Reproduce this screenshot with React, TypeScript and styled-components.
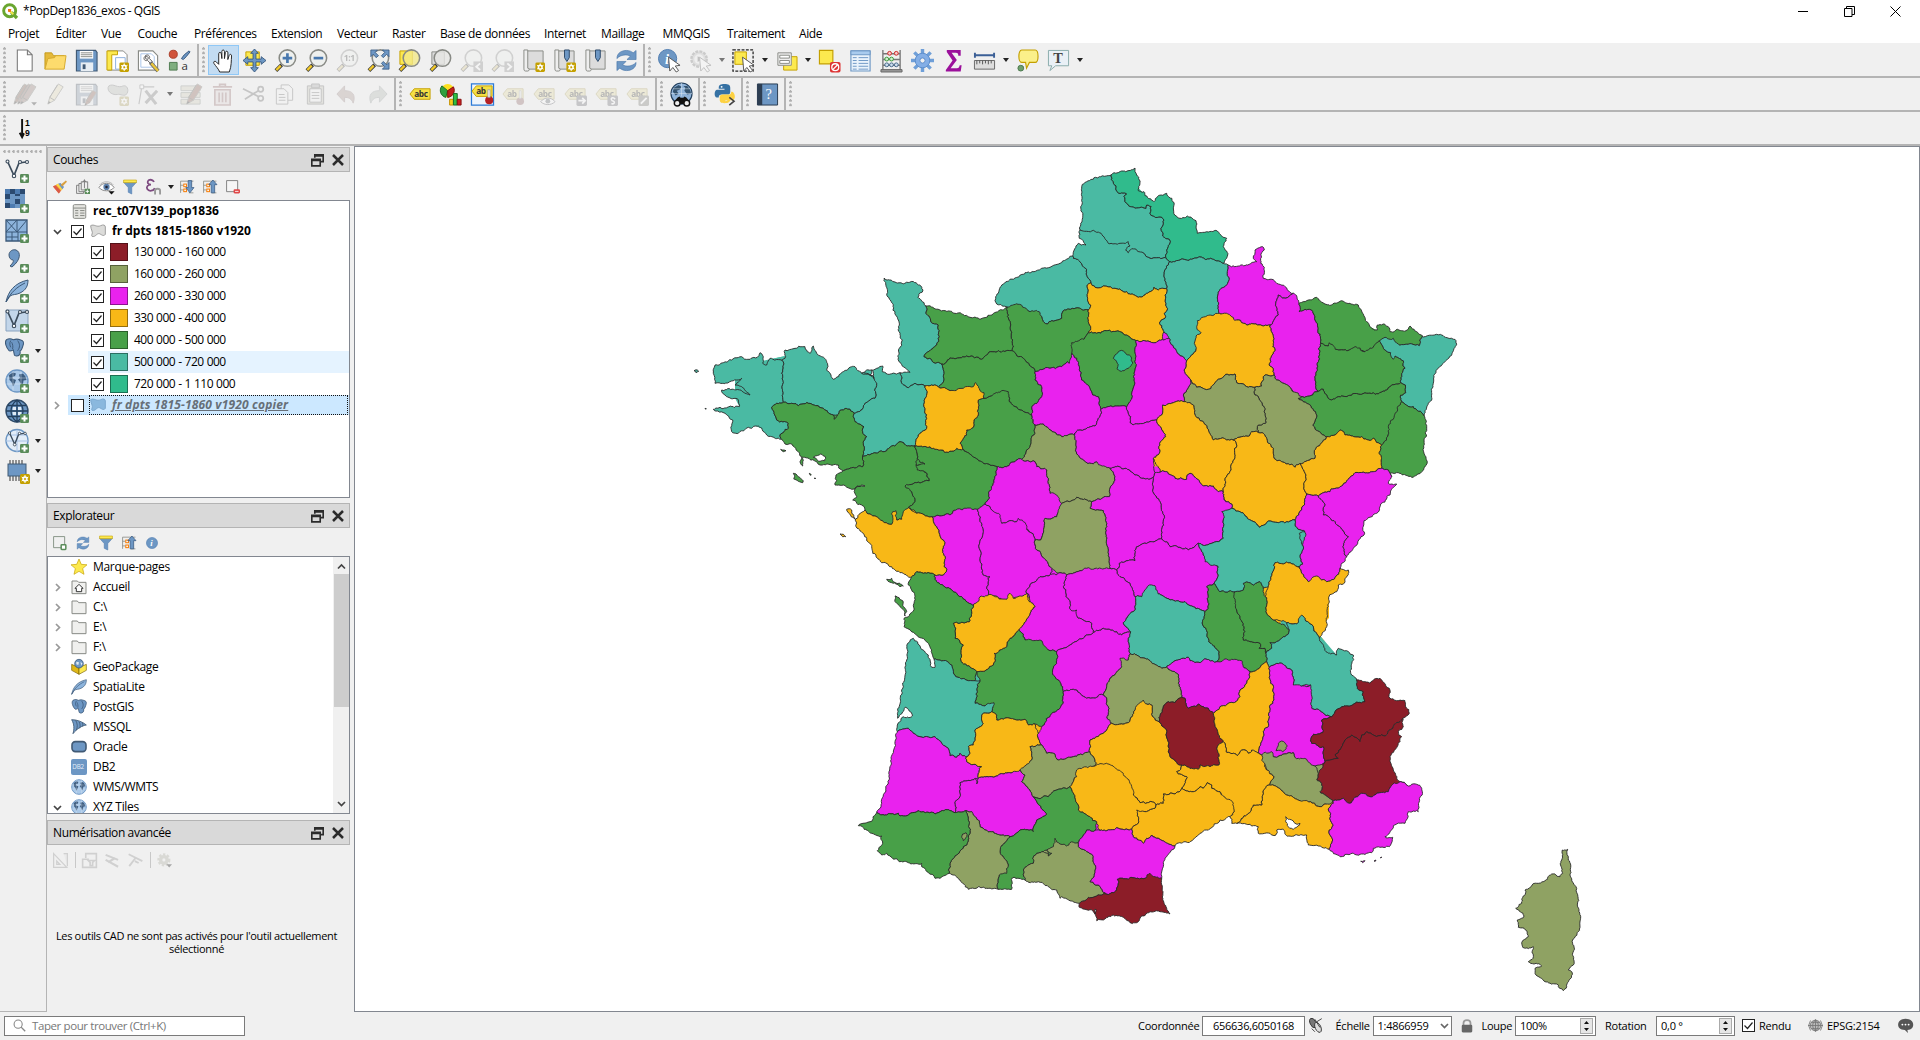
import React from "react";
import styled, { createGlobalStyle, css } from "styled-components";

/* ------------------------------------------------------------------ */
/* Theme values                                                         */
/* ------------------------------------------------------------------ */
const C = {
  window: "#f0f0f0",
  line: "#b4b4b4",
  frame: "#828790",
  title: "#d9d9d9",
  blue: "#6d97c4",
  navy: "#415a75",
  yellow: "#fce94f",
  gold: "#c4a000",
  gray: "#888a85",
};

const Global = createGlobalStyle`
  * { box-sizing: border-box; }
  body {
    margin: 0;
    background: ${C.window};
    color: #000;
    font: 12px/16px "Open Sans", "Noto Sans", sans-serif;
    letter-spacing: -0.38px;
    overflow: hidden;
  }
`;

/* ------------------------------------------------------------------ */
/* Icons                                                                */
/* ------------------------------------------------------------------ */
const Plus = () => (
  <g>
    <rect x="15" y="15" width="9" height="9" rx="1.2" fill="#5a8c5a" />
    <path d="M19.5 16.5v6M16.5 19.5h6" stroke="#fff" strokeWidth="2" />
  </g>
);
const Spark = () => (
  <g>
    <rect x="14" y="14" width="10" height="10" rx="1.5" fill={C.gold} />
    <circle cx="19" cy="19" r="2" fill="none" stroke="#fff" strokeWidth="1.4" />
    <path d="M19 15v8M15.6 17l6.8 4M22.4 17l-6.8 4" stroke="#fff" strokeWidth="1" />
    <circle cx="19" cy="19" r="1" fill={C.gold} />
  </g>
);
const Lens = ({ fill = "#eef0ee", children }: { fill?: string; children?: React.ReactNode }) => (
  <g>
    <path d="M2 22.5l6-6" stroke="#3a3a3a" strokeWidth="4" />
    <path d="M2.4 22l4.6-4.6" stroke="#f2c928" strokeWidth="2.4" />
    <circle cx="14" cy="9.5" r="8.6" fill={fill} stroke={C.gray} strokeWidth="1.6" />
    {children}
  </g>
);
const Tag = ({ text = "abc" }: { text?: string }) => (
  <g>
    <path d="M1 11.5L5.5 6H22v11H5.5z" fill="#f5e045" stroke={C.gold} />
    <text x="5.4" y="14.4" fontSize="8.6" fontWeight="700" fill="#333" fontFamily="Open Sans" letterSpacing="-.3">
      {text}
    </text>
  </g>
);
const Cursor = ({ x = 0, y = 0 }: { x?: number; y?: number }) => (
  <path
    transform={`translate(${x} ${y})`}
    d="M11 7.500l12 8.500-5 .8 3.500 4.700-2.500 1.500-3.500-4.700-3.200 3.700z"
    fill="#fff"
    stroke="#555"
  />
);
const Globe = ({ dark = false }: { dark?: boolean }) => (
  <g>
    <circle cx="12" cy="12" r="11" fill={dark ? C.blue : "#a9c8e8"} stroke={dark ? "#2e4a68" : C.blue} strokeWidth="1.4" />
    {dark ? (
      <g>
        <path d="M1 12h22M3 6.500h18M3 17.500h18M12 1v22M12 1c-8 6-8 16 0 22M12 1c8 6 8 16 0 22" stroke="#24405e" fill="none" strokeWidth="1.300" />
        <path d="M8 8h3v3H7.500zM13 8h3l.5 3H13zM7.500 13H11v3H8zM13 13h3.500l-.5 3h-3z" fill="#dfeaf5" />
      </g>
    ) : (
      <g>
        <path
          d="M4 6l4-2.500 3 1-1 2.500-2.500 1 1 2 2.500 1-1.500 4-1.500 2.500-1.500-4.500L4.500 11zM14 5.500l4-1 2.500 3L21.500 11l-3 .5-.5 3.500-1.500 2-1.500-4-2-2.500 2-1.500z"
          fill="#3d5d80"
        />
        <path d="M1.500 9h21M1.500 15h21M8 2v20M16 2v20" stroke="#ffffff" strokeOpacity=".35" />
      </g>
    )}
  </g>
);
const Recycle = () => (
  <g fill={C.blue} stroke="#3f6ea5" strokeWidth=".6">
    <path d="M2 10C2 4 7 1.500 12 1.500c3 0 5 1 7 2.500l3-2.500V11h-9.500l3.500-3.500C13 5.500 6 5.500 2 10z" />
    <path d="M22 14c0 6-5 8.500-10 8.500-3 0-5-1-7-2.500L2 22.500V13h9.500L8 16.500c3 2 10 2 14-2.500z" />
  </g>
);
const Info = () => (
  <g>
    <circle cx="11" cy="11" r="9.500" fill={C.blue} stroke="#4d7bb0" />
    <text x="8.200" y="16.500" fontSize="15" fontStyle="italic" fontWeight="700" fill="#fff" fontFamily="Liberation Serif">
      i
    </text>
  </g>
);
const Feather = () => (
  <g>
    <path d="M1 23C3 13 9 4 23 1c0 6-2 10-8 13-4 2-7 1-10 3z" fill="#8db4dc" stroke="#3b5878" />
    <path d="M1 23C6 13 12 8 20 4" stroke="#3b5878" fill="none" />
  </g>
);
const Elephant = () => (
  <g>
    <path
      d="M3 2c3-2 6-1 8 0 3-1 5-1 8 0 4 1 5 3 3 8-1 3-2 5-3 5v3c-1 4-7 4-7 1l-1-5c-2 1-4 2-5 1C3 12 0 5 3 2z"
      fill={C.blue}
      stroke="#3b5878"
      strokeWidth="1.200"
    />
    <path d="M8 3c-2 3-1 6 0 8M16 3c3 4 3 8 0 12M10 13c1-3 0-6-1-8" stroke="#3b5878" fill="none" strokeWidth="1.100" />
  </g>
);
const Vee = () => (
  <g fill="none" stroke="#3c4c5c" strokeWidth="1.700">
    <path d="M3 3.500l6 13L14 4l7-1" />
    <circle cx="2.500" cy="2.500" r="1.500" fill="#fff" strokeWidth="1.100" />
    <circle cx="9" cy="17" r="1.700" fill="#fff" strokeWidth="1.100" />
    <circle cx="15" cy="3" r="1.500" fill="#fff" strokeWidth="1.100" />
    <circle cx="22" cy="3" r="1.500" fill="#fff" strokeWidth="1.100" />
  </g>
);
const Scroll = () => (
  <g>
    <path d="M5 2h17v19H5z" fill="#dcdcdc" stroke={C.gray} />
    <path d="M2 1h4v19c2 0 2 3 0 3H3.500C2 23 2 21 2 20z" fill="#eee" stroke={C.gray} />
  </g>
);
const Pin = () => <path d="M12 1h5v8l-2.500 4L12 9z" fill={C.blue} stroke="#2e4a68" />;
const Disk = () => (
  <g>
    <path d="M1.500 1.500h20l1.500 2V23H1.500z" fill={C.blue} stroke={C.navy} strokeWidth="1.200" />
    <path d="M5 2h14v8H5z" fill="#fff" />
    <path d="M6 4h12M6 6h12M6 8h12" stroke={C.gray} />
    <path d="M6 14h13v9H6z" fill="#e8eef4" />
    <path d="M8 16h3v5H8z" fill={C.navy} />
  </g>
);
const Pencil = ({ fill = "#f0dc82", x = 0 }: { fill?: string; x?: number }) => (
  <g transform={`translate(${x} 0)`}>
    <path d="M3 22l2-7L14 1l5 3-9 14z" fill={fill} stroke="#776" />
    <path d="M5 15l5 3M13 2l-8 13" stroke="#554" fill="none" />
    <path d="M3 22l1-3 2 1z" fill="#222" />
  </g>
);
const Brackets = ({ up = false }: { up?: boolean }) => (
  <g>
    <path d="M1 2h22M1 2v20M1 9h5M1 17h5M15 22h8" stroke={C.gray} fill="none" strokeWidth="1.400" />
    <rect x="6.500" y="7" width="4.500" height="4.500" fill="#fff" stroke="#f57900" strokeWidth="1.700" />
    <rect x="6.500" y="15.500" width="4.500" height="4.500" fill="#fff" stroke="#f57900" strokeWidth="1.700" />
    {up ? (
      <path d="M17 0l7 8h-4v14h-6V8h-4z" fill={C.blue} stroke="#33557c" strokeWidth="1.200" />
    ) : (
      <path d="M14 1h6v12h4l-7 9-7-9h4z" fill={C.blue} stroke="#33557c" strokeWidth="1.200" />
    )}
  </g>
);

const ICONS: Record<string, React.ReactNode> = {
  file: <path d="M4.500 1h10.500l5 5v17h-15.500zM15 1v5h5" fill="#fff" stroke="#777" strokeWidth="1.100" />,
  open: (
    <g>
      <path d="M1 21V4h7l2 3h11v4" fill="#e5b93a" stroke="#c49a1c" />
      <path d="M1 21L4 10l7-1 1-2h11l-2 14z" fill="#fddb6d" stroke="#d5a92c" />
    </g>
  ),
  save: <Disk />,
  layout: (
    <g>
      <path d="M2 2h16l4 4v16H2z" fill="#fff" stroke={C.gray} />
      <path d="M1 2h11v4H6v16H1z" fill={C.yellow} stroke={C.gold} />
      <path d="M10 9h10v12H10z" fill="#fff" stroke="#8cb0dc" />
      <Spark />
    </g>
  ),
  layoutManager: (
    <g>
      <path d="M1.500 2h15l5 5v15h-20z" fill="#fff" stroke={C.gray} strokeWidth="1.200" />
      <path d="M4 5h11l3 3v11H4z" fill="none" stroke="#a9c4e8" />
      <path d="M9 7c-3 2-2 6 2 5l3 3 2-2-3-3c1-3-2-5-4-3l3 2-1 2-2-1z" fill="#eee" stroke="#666" />
      <path d="M14 14l8 9" stroke="#666" strokeWidth="4" />
      <path d="M15 15l7 8" stroke="#e9c63c" strokeWidth="2.400" />
    </g>
  ),
  styles: (
    <g>
      <circle cx="5.500" cy="5.500" r="4.200" fill="#d0533a" stroke="#a83d28" />
      <path d="M14 10l3-4 5-4 1 1-4 5-3 3z" fill={C.blue} stroke="#33557c" />
      <path d="M1.500 14h8v8h-8z" fill="#7fae7f" stroke="#4f7a52" />
      <text x="14" y="22" fontSize="12" fill="#333" fontFamily="Open Sans">a</text>
    </g>
  ),
  hand: (
    <path
      d="M8 24c-1-3-4-6-6-9-1-2 1-3 2.500-1.500L7 16V5c0-2 2.500-2 2.700 0l.6 5V2.500c0-2 2.600-2 2.700 0V10l1-6.500c.4-1.800 2.700-1.500 2.600.5L16.500 11l1.500-4.500c.6-1.600 2.600-1 2.400.7C20 12 20.500 18 18 24z"
      fill="#fff"
      stroke="#222"
    />
  ),
  panTo: (
    <g>
      <path d="M3 3h14v14H3z" fill={C.yellow} stroke={C.gold} />
      <path
        d="M12 0l4 4.500h-2.500v6H19V8l5 4-5 4v-2.500h-5.500v6H16L12 24l-4-4.500h2.500v-6H5V16l-5-4 5-4v2.500h5.500v-6H8z"
        fill={C.blue}
        stroke="#33557c"
        strokeWidth=".9"
      />
    </g>
  ),
  zoomIn: <Lens><path d="M14 4.500v10M9 9.500h10" stroke="#4878ae" strokeWidth="2.800" /></Lens>,
  zoomOut: <Lens><path d="M9 9.500h10" stroke="#4878ae" strokeWidth="2.800" /></Lens>,
  zoomOne: (
    <Lens>
      <text x="8" y="13" fontSize="9" fontWeight="700" fill="#444" fontFamily="Open Sans">1:1</text>
    </Lens>
  ),
  zoomFull: (
    <g>
      <Lens />
      <path
        d="M4 1h7L8.500 3.500 12 7 9.500 9 6.500 5.500 4 8zM23 1v7l-2.500-2.500L17 9l-2-2 3.500-3.500L16 1zM23 21h-7l2.500-2.500L15 15l2-2 3.500 3.500L23 14z"
        fill={C.blue}
        stroke="#33557c"
        strokeWidth=".8"
      />
    </g>
  ),
  zoomSelection: (
    <g>
      <path d="M2 2h13v14H2z" fill={C.yellow} stroke={C.gold} />
      <Lens fill="#f3e98acc" />
    </g>
  ),
  zoomLayer: (
    <g>
      <path d="M3 3h13v13H3z" fill="#ddd" stroke={C.gray} />
      <Lens fill="#e6e6e4cc" />
    </g>
  ),
  zoomLast: (
    <g>
      <Lens />
      <path d="M14 13h10v11H14z" fill="#888" />
      <path d="M21 15l-4 3.500 4 3.500" stroke="#fff" fill="none" strokeWidth="2" />
    </g>
  ),
  zoomNext: (
    <g>
      <Lens />
      <path d="M14 13h10v11H14z" fill="#888" />
      <path d="M17 15l4 3.500-4 3.500" stroke="#fff" fill="none" strokeWidth="2" />
    </g>
  ),
  view: <g><Scroll /><Spark /></g>,
  bookmarkNew: <g><Scroll /><Pin /><Spark /></g>,
  bookmark: <g><Scroll /><Pin /></g>,
  refresh: <Recycle />,
  identify: <g><g transform="translate(-1 -1)"><Info /></g><Cursor y={1} /></g>,
  action: (
    <g>
      <circle cx="10.500" cy="10.500" r="8" fill="#bbb" stroke="#777" strokeWidth="2.500" strokeDasharray="3 1.200" />
      <circle cx="10.500" cy="10.500" r="5" fill="#eee" />
      <path d="M9 7.500l5 3-5 3z" fill="#555" />
      <Cursor y={1} />
    </g>
  ),
  select: (
    <g>
      <path d="M1 1h21v22H1z" fill="none" stroke="#222" strokeDasharray="3 1.500" strokeWidth="1.300" />
      <path d="M3 3h12v13H3z" fill={C.yellow} stroke={C.gold} />
      <Cursor y={1} />
    </g>
  ),
  form: (
    <g>
      <path d="M9 8h14v14H9z" fill={C.yellow} stroke={C.gold} />
      <path d="M3 4h14v13H3z" fill="#eee" stroke={C.gray} />
      <path d="M5 6.500h10v3H5zM5 12h10v3H5z" fill="#fff" stroke={C.gray} />
    </g>
  ),
  deselect: (
    <g>
      <path d="M1.500 1.500h14v14h-14z" fill={C.yellow} stroke={C.gold} strokeWidth="1.200" />
      <rect x="12.500" y="13.500" width="11" height="11" rx="2" fill="#d33" />
      <circle cx="18" cy="19" r="3.600" fill="none" stroke="#fff" strokeWidth="1.400" />
      <path d="M20.500 16.500l-5 5" stroke="#fff" strokeWidth="1.400" />
    </g>
  ),
  table: (
    <g>
      <path d="M2 2h20v21H2z" fill="#eaf3fc" stroke={C.blue} strokeWidth="1.200" />
      <path d="M2 2h20v4H2z" fill="#a9cbee" stroke={C.blue} />
      <path d="M4 9h4M4 12h4M4 15h4M4 18h4M4 21h4M10 9h10M10 12h10M10 15h10M10 18h10M10 21h10" stroke={C.blue} strokeWidth="1" />
    </g>
  ),
  abacus: (
    <g>
      <path d="M3 1v21M21 1v21M3 5h18M3 11h18M3 17h18" stroke="#777" strokeWidth="1.400" />
      <path d="M1 21.500h22v2.500H1z" fill="#999" stroke="#666" />
      <circle cx="10" cy="4.500" r="2" fill="#f7caca" stroke="#c22" />
      <circle cx="17" cy="4.500" r="2" fill="#f7caca" stroke="#c22" />
      <circle cx="7" cy="10.500" r="2" fill="#cdeccd" stroke="#3a9a3a" />
      <circle cx="12" cy="10.500" r="2" fill="#cdeccd" stroke="#3a9a3a" />
      <circle cx="7" cy="16.500" r="2" fill="#cde" stroke="#468" />
      <circle cx="12" cy="16.500" r="2" fill="#cde" stroke="#468" />
      <circle cx="17" cy="16.500" r="2" fill="#cde" stroke="#468" />
    </g>
  ),
  gear: (
    <g>
      <path
        d="M12 0v24M0 12h24M3.500 3.500l17 17M20.500 3.500l-17 17"
        stroke="#6f9fd8"
        strokeWidth="3.600"
      />
      <circle cx="12" cy="12" r="7.600" fill="#83aee6" stroke="#5b8ccb" />
      <circle cx="12" cy="12" r="2.700" fill="#f0f0f0" stroke="#5b8ccb" />
    </g>
  ),
  sigma: <path d="M5 1h14.500v6H17c0-2-.5-3-2.500-3H10l5.500 7.500L9 20h6.500c2 0 2.500-1 3-3h2l-1 6.500H4V22l7-10-6-9z" fill="#9b109b" />,
  ruler: (
    <g>
      <path d="M2 4v5M22 4v5M2 6.500h20" stroke="#3b5f96" strokeWidth="2" />
      <path d="M1.500 12h21v9h-21z" fill="#ddd" stroke="#666" />
      <path d="M4 12v4M7 12v3M10 12v4M13 12v3M16 12v4M19 12v3" stroke="#555" />
    </g>
  ),
  tip: (
    <g>
      <path d="M6 1h14c4 0 4 13 0 13h-6l-3 6-1-6H6C2 14 2 1 6 1z" fill="#fbf08a" stroke={C.gold} strokeWidth="1.200" />
      <circle cx="5" cy="20" r="3" fill="#6da06d" stroke="#4f7a52" />
    </g>
  ),
  annotation: (
    <g>
      <path d="M1.500 1.500h21v16H9l-6 5 2-5H1.500z" fill="#e9f0f6" stroke="#8aa" />
      <text x="6.500" y="14.500" fontSize="15" fontWeight="700" fill="#444" fontFamily="Liberation Serif">T</text>
    </g>
  ),
  pencils: (
    <g>
      <Pencil fill="#a0522d" x={-2} />
      <Pencil fill="#b06050" x={2} />
      <Pencil fill="#b07060" x={5} />
      <path d="M19 20h6l-3 3.500z" fill="#222" />
    </g>
  ),
  pencil: <Pencil x={1} />,
  saveEdits: <g><Disk /><g transform="translate(8 7) scale(.75)"><Pencil fill="#c05030" /></g></g>,
  addFeature: <g><path d="M3 3c5-3 9 3 15 0 4-1 6 4 4 8-3 4-7 0-10 1-7 1-12-5-9-9z" fill="#b8bdaf" stroke="#777" /><Spark /></g>,
  vertex: (
    <g>
      <path d="M4 4h14M5 4L2 22" stroke="#777" strokeWidth="1.200" />
      <path d="M3 2h4v4H3z" fill="#fff" stroke="#777" />
      <path d="M9 8l11 14M21 8L9 21" stroke="#777" strokeWidth="3.200" />
    </g>
  ),
  editAttributes: (
    <g>
      <path d="M1 3h20v5H1zM1 10h20v5H1zM1 17h20v5H1z" fill="#d8cf9a" stroke="#7d8b7d" />
      <Pencil fill="#c05030" x={4} />
    </g>
  ),
  trash: <path d="M2 4h20M9 4V1.500h6V4M4 7h16v16H4zM8.500 10v10M12 10v10M15.500 10v10" fill="#ead0d0" stroke="#c06060" strokeWidth="1.700" />,
  cut: (
    <g stroke="#666" fill="none" strokeWidth="1.800">
      <path d="M1 6l16 8M3 17L17 8" />
      <circle cx="19.500" cy="6.500" r="2.700" />
      <circle cx="19.500" cy="16" r="2.700" />
    </g>
  ),
  copy: (
    <g fill="#f6f6f6" stroke="#666">
      <path d="M8.500 2h8l4 4v12h-12z" />
      <path d="M3.500 6h8l4 4v12h-12zM6 12h6M6 15h7M6 18h7" />
    </g>
  ),
  paste: (
    <g fill="#f6f6f6" stroke="#666">
      <path d="M3.500 3h17v19h-17z" fill="#c9c3a8" />
      <path d="M6 6h12v14H6zM8 10h8M8 13h8M8 16h8" />
      <path d="M8 1h8v4H8z" fill="#aaa" />
    </g>
  ),
  undo: <path d="M10 3v5c8 0 12 4 9 13-2-5-5-6-9-6v5L2 11.500z" fill="#c09080" stroke="#a77" />,
  redo: <path d="M14 3v5C6 8 2 12 5 21c2-5 5-6 9-6v5l8-8.500z" fill="#a8b8a8" stroke="#899" />,
  label: <Tag />,
  diagram: (
    <g>
      <circle cx="8" cy="8" r="7" fill="#fce020" />
      <path d="M8 8L2 3a7.500 7.500 0 0 0 4 12z" fill="#30a040" stroke="#186828" />
      <path d="M8 8l6-4a7.500 7.500 0 0 1-6 11z" fill="#c02020" stroke="#801010" />
      <path d="M10 17h4v6h-4z" fill="#fcd020" stroke="#c49000" />
      <path d="M14 11h4v12h-4z" fill="#30c040" stroke="#186828" />
      <path d="M18 17h4v6h-4z" fill="#d02020" stroke="#801010" />
    </g>
  ),
  pinLabel: (
    <g>
      <path d="M.500 1h23v22H.500z" fill="#eef4fb" stroke="#2a7ad8" strokeWidth="1.300" />
      <g transform="translate(0 -3)"><Tag text="ab" /></g>
      <circle cx="19" cy="18" r="4.200" fill="#b52025" />
      <path d="M17.500 7h2.500v8h-2.500z" fill="#eee" stroke="#999" strokeWidth=".7" />
    </g>
  ),
  labelPin: (
    <g>
      <Tag text="ab" />
      <circle cx="19" cy="19" r="4" fill="#b55" />
      <path d="M18 8h2v8h-2z" fill="#eee" stroke="#999" strokeWidth=".7" />
    </g>
  ),
  labelShow: (
    <g>
      <Tag />
      <path d="M8 19.500c4-5 11-5 15 0-4 4-11 4-15 0z" fill="#fff" stroke="#556" />
      <circle cx="15.500" cy="19" r="2.500" fill="#567" />
    </g>
  ),
  labelMove: <g><Tag /><rect x="13" y="13" width="11" height="11" rx="1.500" fill="#667" /><path d="M15 18.500h7M19 15.500l3 3-3 3" stroke="#fff" fill="none" strokeWidth="1.800" /></g>,
  labelRotate: <g><Tag /><rect x="13" y="13" width="11" height="11" rx="1.500" fill="#667" /><path d="M21 17c-2-3-6-1-3 1.500 4 1 2 4-1 3" stroke="#fff" fill="none" strokeWidth="1.600" /></g>,
  labelEdit: <g><Tag /><rect x="13" y="13" width="11" height="11" rx="1.500" fill="#776" /><path d="M15.500 21.500l6-6" stroke="#fff" strokeWidth="2" /></g>,
  metasearch: (
    <g>
      <circle cx="12" cy="11" r="11" fill="#8fb3d9" stroke="#24405e" strokeWidth="1.200" />
      <path d="M4 5l5-3 3 2-2 3-3 1 2 3-3 2-3-4zM14 3l4 0 3 4 1 4-4 1-3-4 1-3z" fill="#34536f" />
      <path d="M1 11h22M12 0v14M3 6h18" stroke="#dfeaf5" strokeOpacity=".5" />
      <path d="M5 22c0-4 2-7 5-8l1 1.500h3l1-1.500c3 1 5 4 5 8z" fill="#111" />
      <circle cx="7.500" cy="21" r="3" fill="#eee" stroke="#111" strokeWidth="1.500" />
      <circle cx="17.500" cy="21" r="3" fill="#eee" stroke="#111" strokeWidth="1.500" />
    </g>
  ),
  python: (
    <g>
      <path d="M6 5c0-3 2-4 6-4s6 1 6 4v4c0 2-1 3-3 3H9c-2 0-3 1-3 3H4C1 15 1 8 4 7h8V6H6z" fill="#3672a4" />
      <path d="M18 17c0 3-2 4-6 4s-5-1-5-4v-2c0-2 1-3 3-3h6c2 0 3-1 3-3h1c3 1 4 7 1 9h-8v1z" fill="#fdd243" />
      <circle cx="9" cy="4" r="1" fill="#fff" />
      <path d="M17 15l5 4-5 4" stroke="#444" fill="none" strokeWidth="1.600" />
    </g>
  ),
  book: (
    <g>
      <path d="M1.500 1h21v22h-21z" fill={C.blue} stroke="#27394e" />
      <path d="M1.500 1h5v22h-5z" fill="#2d3e52" />
      <text x="10" y="17" fontSize="15" fill="#fff" fontFamily="Liberation Serif">?</text>
    </g>
  ),
  sort: (
    <g>
      <path d="M9.500 2v18M7 16.500L9.500 21l2-4" stroke="#111" fill="none" strokeWidth="2" />
      <text x="12.500" y="9.200" fontSize="9" fontWeight="700" fontFamily="Liberation Sans">1</text>
      <text x="12.500" y="19.500" fontSize="9" fontWeight="700" fontFamily="Liberation Sans">9</text>
    </g>
  ),
  addVector: <g><Vee /><Plus /></g>,
  addRaster: (
    <g>
      <path d="M0 0h20v19H0z" fill={C.blue} />
      <path d="M5 0h5v5H5zM15 0h5v5h-5zM0 5h5v5H0zM10 10h5v5h-5zM0 14h5v5H0zM10 5h5v2h-5z" fill="#2b4a70" />
      <path d="M0 0h5v5H0zM10 0h5v5h-5zM5 15h5v4H5z" fill="#4d7bb0" />
      <Plus />
    </g>
  ),
  addMesh: (
    <g>
      <path d="M1 1h21v21H1z" fill="#8db4dc" stroke="#3b5878" strokeWidth="1.300" />
      <path d="M1 13h21M12 1v12M1 1l11 12M12 1L1 13M22 1L12 13M7 13v9M1 18h12M13 13v9" stroke="#3b5878" fill="none" strokeWidth="1" />
      <Plus />
    </g>
  ),
  addText: <g><path d="M4 6c0-4 4-6 7-5 5 2 5 10-4 17l-2-1c3-3 4-5 3-6-2 0-4-2-4-5z" fill={C.blue} stroke={C.navy} /><Plus /></g>,
  addSpatialite: <g><Feather /><Plus /></g>,
  addVirtual: <g><path d="M1 1h22v21H1z" fill="#c3d6ea" stroke="#8aa3bf" /><Vee /><Plus /></g>,
  addPostgis: <g><g transform="translate(-1 -1) scale(.85)"><Elephant /></g><Plus /></g>,
  addWms: <g><Globe /><Plus /></g>,
  addWcs: <g><Globe dark /><Plus /></g>,
  addWfs: <g><circle cx="12" cy="11.500" r="11" fill="#e3edf8" stroke={C.blue} strokeWidth="1.400" /><path d="M1 12h22M12 1v22M3 6h18" stroke="#a9c4e8" /><g transform="translate(2.500 2) scale(.8)"><Vee /></g><Plus /></g>,
  addChip: <g><path d="M5 1v21M8 1v21M11 1v21M14 1v21M17 1v21" stroke="#333" /><rect x="3" y="5" width="18" height="12" fill={C.blue} stroke={C.navy} /><g transform="translate(1 1)"><Spark /></g></g>,
  brush: (
    <g>
      <path d="M0 11l9-4 7 8-6 8z" fill="#f08030" />
      <path d="M0 11l4-2 9 10-3 4z" fill="#d95a4a" />
      <path d="M5 8l4-2 8 9-3 3z" fill="#fbd848" />
      <path d="M9 6l4-1 6 7-3 4z" fill="#6d97c4" />
      <path d="M13 8l9-7 2 2-8 8z" fill="#d9a040" />
    </g>
  ),
  addGroup: (
    <g fill="#eee" stroke="#777" strokeWidth="1.500">
      <path d="M1 9h12v14H1z" /><path d="M5 6h11v14H5z" /><path d="M9 3h11v14H9zM14.500 -1v15M11.500 4l3-4 3 4" />
      <rect x="15" y="15" width="9" height="9" fill="#5a8c5a" stroke="none" />
      <path d="M19.500 16.500v6M16.500 19.500h6" stroke="#fff" />
    </g>
  ),
  eye: (
    <g>
      <path d="M0 12C5 3 19 3 24 12c-5 7-19 7-24 0z" fill="#fff" stroke="#888" strokeWidth="1.600" />
      <circle cx="12" cy="11" r="5" fill="#5b7ea8" /><circle cx="12" cy="11" r="2" fill="#223" />
      <path d="M1 8C6 1 18 1 23 8" stroke="#999" fill="none" />
      <path d="M15 18h10l-5 5z" fill="#111" />
    </g>
  ),
  filter: <g><path d="M1 4h22l-8 9v11l-6-3v-8z" fill={C.blue} stroke="#4d7bb0" /><path d="M1 0h22v4.500H1z" fill={C.yellow} stroke={C.gold} /></g>,
  epsilon: (
    <g>
      <path d="M13 3C9-3 1 0 3 5c.5 1.500 2.500 2.500 5 2.500C3 7.500 0 11 2 14.500c3 4.500 10 3 12-1.500" stroke="#7d4a80" fill="none" strokeWidth="2.800" />
      <path d="M14.500 23v-6c0-4 8-4 8 0v6" stroke="#999" fill="none" strokeWidth="3" />
    </g>
  ),
  expand: <Brackets />,
  collapse: <Brackets up />,
  remove: <g><path d="M1 1h19v19H1z" fill="#f6f6f6" stroke="#777" strokeWidth="1.500" /><rect x="13" y="16" width="11" height="7" rx="2" fill="#e04848" /><path d="M15.500 19.500h6" stroke="#fff" strokeWidth="1.500" /></g>,
  addSel: <g><path d="M1 1h19v19H1z" fill="#f0f0f0" stroke="#7d8b7d" strokeWidth="1.500" /><rect x="14" y="15" width="8" height="8" rx="1" fill="#fff" stroke="#5a8c5a" strokeWidth="2.600" /></g>,
  info: <g transform="translate(1 1)"><Info /></g>,
  star: <path d="M12 0l3.400 8 8.600.7-6.500 5.600 2 8.700L12 18.500 4.500 23l2-8.700L0 8.700 8.600 8z" fill={C.yellow} stroke={C.gold} />,
  home: <g><path d="M1.500 3h8l2 2h11v17h-21z" fill="#f0f0ee" stroke={C.gray} strokeWidth="1.500" /><path d="M6 14l6-6 6 6h-2v5H8v-5z" fill="#fff" stroke="#333" strokeWidth="1.500" /></g>,
  folder: <path d="M1.500 3h8l2 2.500h11V22h-21z" fill="#f0f0ee" stroke={C.gray} strokeWidth="1.500" />,
  geopackage: <g><path d="M1 8l11 5v10L1 17z" fill="#e0b818" stroke="#7a6000" /><path d="M23 8l-11 5v10l11-6z" fill={C.yellow} stroke="#7a6000" /><circle cx="12" cy="7" r="6.500" fill={C.blue} stroke="#2e4a68" /><path d="M8 4l4 1-1 4-3-1zM14 5l3 1-1 4z" fill="#dfeaf5" /></g>,
  feather: <Feather />,
  elephant: <Elephant />,
  mssql: <path d="M1 1c8 0 16 3 22 8-6 1-14 5-20 13 2-7 2-14-2-21zM7 2c3 5 3 10 1 15M12 4c2 3 2 7 1 10M17 6c1 2 1 3 0 5" fill={C.blue} stroke={C.navy} strokeWidth="1.300" />,
  oracle: <rect x="1.500" y="4" width="21" height="15" rx="5" fill={C.blue} stroke={C.navy} strokeWidth="2.400" />,
  db2: <g><rect width="24" height="24" rx="3" fill={C.blue} /><text x="2" y="15.500" fontSize="9.500" fill="#e4eefa" fontFamily="Open Sans">DB2</text></g>,
  globe: <Globe />,
  sheet: <g><rect x="2" y="1" width="20" height="22" rx="2" fill="#e4e4e0" stroke={C.gray} strokeWidth="1.500" /><path d="M2 6.500h20M5 10.500h5M5 14.500h5M5 18.500h5M13 10.500h7M13 14.500h7M13 18.500h7" stroke={C.gray} strokeWidth="1.600" /></g>,
  poly: <path d="M1 4c5-3 9 3 15 0 4-2 7-1 7 2v11c-3 4-6 0-9-1-4-1-6 6-11 4-2-2 2-4 0-8-1-3-2-5-2-8z" fill="#dcdcda" stroke="#999" strokeWidth="1.400" />,
  polyBlue: <path d="M1 4c5-3 9 3 15 0 4-2 7-1 7 2v11c-3 4-6 0-9-1-4-1-6 6-11 4-2-2 2-4 0-8-1-3-2-5-2-8z" fill="#8ab8de" stroke="#7aa6cc" strokeWidth="1.400" />,
  cad: <g stroke="#888" fill="none" strokeWidth="2"><path d="M1 1l21 22H1zM6 13v5h5z" /><path d="M17 1h6v20" fill="#ddd" /></g>,
  construct: <path d="M6 8V1h17v22H1V10h10M10 12h10l-3 3v5h-4v-5z" fill="none" stroke="#888" strokeWidth="2.600" />,
  parallel: <path d="M1 3l20 8M1 11l20 11M16 8L5 15" fill="none" stroke="#888" strokeWidth="3.400" />,
  perpendicular: <path d="M1 2l22 11M2 21L12 8M11 13l6 3" fill="none" stroke="#888" strokeWidth="3" />,
  cog: <g><circle cx="11" cy="11" r="8" fill="#a8a888" stroke="#a8a888" strokeWidth="5" strokeDasharray="3.500 2.400" /><circle cx="11" cy="11" r="2.500" fill="#f0f0f0" /><path d="M15 18h9l-4.500 5z" fill="#000" /></g>,
  search: <g fill="none" stroke="#888" strokeWidth="2"><circle cx="9.500" cy="9.500" r="7.500" /><path d="M15 15l7.500 7.500" strokeWidth="2.600" /></g>,
  mouse: <g fill="#777" stroke="#333" strokeWidth="1.400"><ellipse cx="8" cy="8" rx="4.500" ry="8" transform="rotate(-25 8 8)" /><ellipse cx="16" cy="15" rx="4.500" ry="8.500" transform="rotate(-25 16 15)" fill="#ddd" /><path d="M14 6l8-5M6 17l5 5M11 2l8 13" /></g>,
  lock: <g><path d="M6 11V7c0-7 12-7 12 0v4" fill="none" stroke="#999" strokeWidth="3" /><rect x="3" y="10" width="18" height="13" rx="2" fill="#666" /></g>,
  crs: <g fill="none" stroke="#777" strokeWidth="1.400"><circle cx="12" cy="12" r="8.500" fill="#bbb" /><path d="M0 12h24M12 2v20M5 7h14M5 17h14M12 3c-6 6-6 12 0 18M12 3c6 6 6 12 0 18M4 4l-3 8 3 8M20 4l3 8-3 8" /></g>,
  bubble: <g><path d="M12 1c16 0 16 18 3 18l1 5-5-5C-4 19-3 1 12 1z" fill="#555" /><circle cx="7" cy="10.500" r="1.500" fill="#fff" /><circle cx="12" cy="10.500" r="1.500" fill="#fff" /><circle cx="17" cy="10.500" r="1.500" fill="#fff" /></g>,
  float: <path d="M7 7V1.500h15.500V14H17M7 3.500h15.500M1.500 10H17v12H1.500zM1.500 12H17" fill="none" stroke="#2b2b2b" strokeWidth="3" />,
  close: <path d="M2 2l20 20M22 2L2 22" stroke="#2b2b2b" strokeWidth="5" />,
  logo: (
    <g fill="none">
      <circle cx="11.500" cy="11.500" r="9" stroke="#6aa62f" strokeWidth="4.400" />
      <path d="M14 14l8.500 8.500" stroke="#6aa62f" strokeWidth="5" />
      <path d="M12 12l5 5" stroke="#f0e64a" strokeWidth="3" />
      <path d="M9 9h5l-1 5-4-1z" fill="#ee7913" />
    </g>
  ),
};

const Svg = styled.svg<{ $size: number; $dim?: boolean }>`
  width: ${(p) => p.$size}px;
  height: ${(p) => p.$size}px;
  flex: none;
  display: block;
  overflow: visible;
  ${(p) => p.$dim && css`opacity: 0.3; filter: saturate(0.4);`}
`;
const Icon = ({ name, size = 24, dim = false }: { name: string; size?: number; dim?: boolean }) => (
  <Svg viewBox="0 0 24 24" $size={size} $dim={dim}>
    {ICONS[name]}
  </Svg>
);

/* ------------------------------------------------------------------ */
/* Map                                                                  */
/* ------------------------------------------------------------------ */
const FILL: Record<string, string> = {
  D: "#8c1d28",
  A: "#8fa263",
  M: "#e922ee",
  O: "#f8b817",
  G: "#48a048",
  T: "#4abaa3",
  E: "#30bb8c",
  W: "#ffffff",
};
/* Every map sheet has its own origin; coordinates are thirds of a pixel. */
const SHEET: Record<string, [number, number]> = {
  W: [670, 320],
  N: [980, 150],
  E: [1060, 440],
  S: [840, 560],
  R: [1120, 640],
  C: [1500, 840],
};

/* sheet, class, ring — painted in order, southern neighbours over northern ones */
const AREAS: [string, string, string][] = [
  ["N", "T", "393,75 358,80 328,92 305,110 306,140 302,170 308,200 302,220 300,240 400,300 500,322 560,328 556,318 565,290 568,268 548,258 543,235 552,210 520,198 510,190 514,170 500,165 498,175 455,170 435,155 432,140 440,132 412,125 400,95"],
  ["N", "E", "393,75 402,68 430,63 465,54 470,75 478,90 475,122 492,125 505,145 522,155 532,140 560,130 578,155 584,195 600,205 622,198 648,212 652,250 680,245 712,243 740,265 730,290 743,315 732,340 700,328 655,322 600,330 560,328 556,318 565,290 568,268 548,258 543,235 552,210 520,198 510,190 514,170 500,165 498,175 455,170 435,155 432,140 440,132 412,125 400,95"],
  ["N", "T", "278,318 240,340 210,352 175,360 135,368 100,388 65,405 55,430 45,452 50,462 82,472 140,490 200,520 260,490 320,490 335,405 320,360"],
  ["N", "T", "300,240 340,241 365,253 385,280 420,280 445,275 450,288 437,300 445,308 455,296 492,310 510,325 557,322 570,335 565,345 552,375 560,415 535,420 522,412 510,425 475,442 440,425 405,415 370,408 345,412 333,398 325,385 320,360 295,330 278,318 285,295 295,280 318,285 298,265 297,245"],
  ["N", "G", "82,472 118,463 145,483 178,485 185,500 190,515 203,522 215,512 245,505 250,482 285,475 325,490 330,540 312,568 290,620 262,640 210,655 165,668 155,645 128,620 100,605 97,570 92,530 82,500"],
  ["N", "O", "322,405 333,398 345,412 370,408 405,415 440,425 475,442 510,425 522,412 535,420 558,412 562,450 556,485 556,572 470,572 420,555 350,550 322,545 332,530 325,515 325,480 332,465 322,440"],
  ["N", "T", "570,335 600,330 655,322 700,328 735,340 748,345 742,370 745,395 720,430 715,490 690,520 660,580 620,632 585,605 562,565 552,545 540,515 555,505 553,490 562,480 556,450 560,415 552,375 565,345"],
  ["N", "M", "745,345 790,347 830,335 820,325 825,300 848,290 853,300 842,340 853,352 850,385 870,388 890,400 915,410 935,428 930,440 900,450 890,520 870,530 810,530 760,520 718,490 715,430 745,395 742,370"],
  ["N", "M", "888,455 895,435 915,445 940,430 955,450 957,482 990,478 1002,510 1008,550 1022,575 1008,640 1005,690 1012,725 965,740 930,715 885,690 865,650 880,580 872,530 895,495"],
  ["N", "O", "620,632 648,600 643,580 648,558 663,548 650,530 652,512 690,495 718,490 740,490 770,510 790,520 850,528 870,525 880,560 878,590 885,600 872,635 867,645 880,660 882,675 850,680 845,710 820,715 780,705 768,672 735,672 700,695 685,718 650,710 630,700 628,685 615,660 612,640"],
  ["N", "G", "957,460 985,450 1010,442 1035,462 1055,465 1085,452 1110,460 1135,465 1148,490 1160,515 1175,535 1192,540 1192,525 1210,522 1225,530 1230,545 1278,542 1290,528 1310,545 1327,555 1318,585 1270,580 1230,590 1200,600 1160,610 1090,610 1050,590 1022,580 1005,510 995,480 975,478 958,485"],
  ["N", "G", "1022,580 1045,588 1048,578 1075,600 1108,600 1125,590 1155,605 1200,585 1215,595 1238,610 1275,640 1268,700 1200,735 1060,752 1030,720 1012,720 1005,690 1012,640 1018,610"],
  ["N", "T", "1327,558 1385,555 1428,572 1415,615 1390,640 1368,662 1360,700 1355,750 1332,800 1300,785 1262,752 1265,735 1278,730 1275,705 1262,698 1265,675 1275,655 1270,632 1245,618 1240,628 1232,608 1215,600 1198,572 1215,562 1240,565 1245,575 1258,585 1285,583 1318,587"],
  ["N", "G", "955,745 1000,730 1030,718 1040,735 1055,750 1075,740 1160,730 1195,732 1230,710 1262,698 1276,705 1277,728 1262,735 1262,752 1260,800 1215,885 1165,880 1080,855 1040,862 1018,845 998,825 1003,790 985,770"],
  ["N", "G", "1265,755 1300,770 1332,798 1340,835 1332,870 1332,910 1342,935 1325,965 1300,982 1255,968 1240,965 1232,985 1225,960 1205,955 1197,900 1208,880 1220,870 1225,830 1245,790"],
  ["N", "A", "825,712 845,708 850,680 882,675 890,690 930,712 965,740 955,745 980,760 1000,780 1010,795 998,825 1018,845 1040,862 1035,875 1008,895 1005,930 975,940 945,952 905,935 880,930 885,895 850,850 828,835 840,820 858,815 855,775 825,735"],
  ["N", "A", "632,700 650,712 685,718 710,692 735,675 765,672 770,698 805,712 825,712 825,735 855,775 858,818 835,825 835,845 810,860 765,870 740,868 700,870 670,815 645,800 630,760 612,755 612,725"],
  ["N", "G", "325,548 350,550 380,542 430,552 466,570 470,620 460,690 455,740 440,772 362,778 355,740 325,720 300,670 280,600 275,578 312,568"],
  ["N", "E", "405,615 415,605 430,603 448,615 458,640 445,655 432,662 412,658 412,640 400,625"],
  ["N", "M", "468,572 510,575 550,570 568,565 590,605 620,632 612,660 632,690 610,735 612,755 580,768 548,775 530,815 495,818 448,820 450,800 440,770 452,750 458,720 468,650"],

  ["W", "T", "642,-126 682,-111 738,-112 759,-90 744,-68 757,-55 768,-20 782,3 805,15 808,50 800,75 770,100 765,110 785,125 808,130 822,155 820,185 805,195 770,198 735,190 715,203 695,190 690,160 720,157 700,140 687,125 688,85 697,60 690,40 685,0 675,-24 668,-49 650,-78"],
  ["W", "G", "768,-42 810,-30 855,-20 900,-8 930,-2 966,-15 1011,-39 1012,-10 1022,15 1028,60 1025,95 985,100 930,125 880,120 820,130 790,127 762,110 770,98 800,75 808,50 805,15 782,3 768,-20"],
  ["W", "G", "815,132 850,115 890,108 935,118 955,100 985,92 1025,92 1045,110 1060,115 1085,150 1095,165 1115,200 1115,220 1085,255 1090,290 1045,275 1015,230 960,240 930,235 830,215 808,200 822,180 822,155"],
  ["W", "T", "130,160 135,135 160,128 185,120 215,110 240,118 262,112 270,98 280,110 278,130 290,135 300,115 330,120 338,150 335,200 340,247 315,260 340,300 355,312 350,345 335,355 290,345 265,318 245,325 235,322 205,340 185,335 188,300 165,280 130,268 150,262 208,260 205,240 165,225 155,210 190,208 240,225 215,200 195,195 215,175 200,180 180,185 135,190"],
  ["W", "T", "335,120 345,115 345,90 375,85 405,80 412,95 420,100 430,78 440,100 455,110 470,125 470,150 490,178 520,155 555,140 575,155 590,150 612,175 620,180 618,235 600,240 565,275 510,290 420,260 345,247 336,200 338,150"],
  ["W", "T", "575,160 600,165 612,175 605,150 620,145 638,138 637,155 650,162 690,158 695,190 715,203 735,190 770,198 765,250 770,325 745,345 732,378 712,385 695,375 660,390 578,408 590,350 580,320 557,300 565,275 600,240 615,235 620,190 610,170"],
  ["W", "G", "305,262 320,250 340,247 385,257 420,250 460,265 490,285 492,298 515,270 540,268 552,280 555,305 582,320 578,340 590,350 580,375 578,440 560,442 540,445 520,452 505,435 450,435 440,425 400,412 385,395 365,372 345,372 335,358 330,345 355,325 355,310 320,300 312,280"],
  ["W", "W", "430,412 452,402 466,410 464,422 450,424 440,418"],
  ["W", "G", "370,460 378,462 385,470 400,482 398,488 385,484 372,478"],
  ["W", "G", "332,388 340,390 348,392 340,395"],
  ["W", "G", "395,412 390,425 398,438 398,425"],
  ["W", "T", "72,152 82,150 86,154 78,158"],
  ["W", "G", "418,460 424,464 421,466"],
  ["W", "G", "433,474 437,475 435,477"],
  ["W", "T", "105,265 109,266 107,268"],
  ["W", "G", "505,460 520,452 540,445 578,440 578,408 650,392 665,378 690,365 712,378 732,378 740,400 750,440 775,480 720,500 735,550 720,575 700,590 665,615 640,605 600,585 585,570 575,555 548,540 560,530 555,505 585,498 575,495 545,508 520,495 495,495 500,482 498,465"],
  ["W", "G", "732,380 750,385 765,380 835,395 875,390 890,400 940,430 982,440 970,490 950,520 950,550 940,575 850,590 785,590 740,580 722,555 735,545 725,515 705,498 740,488 778,482 772,462 742,450 738,435 765,432 742,415 740,395"],
  ["W", "G", "942,232 965,228 995,212 1015,215 1018,245 1045,268 1085,278 1088,292 1100,305 1088,340 1085,370 1055,400 1050,415 1015,435 985,440 960,435 935,425 880,400 870,375 890,345 890,330 912,300 925,285 925,240"],
  ["W", "O", "765,198 785,195 805,200 840,212 880,205 910,200 917,188 930,212 942,218 942,235 925,240 925,285 912,300 905,325 890,330 890,345 870,370 878,388 860,385 835,397 800,388 780,380 735,378 745,345 770,325 768,290 762,260 772,215"],
  ["N", "M", "165,665 210,655 245,650 262,635 268,640 275,610 290,625 298,650 302,680 328,710 338,735 355,740 362,778 358,805 345,828 288,855 245,860 205,850 170,820 155,795 160,765 185,740 185,710 165,690"],
  ["N", "A", "165,825 190,822 210,840 245,860 288,850 290,910 325,942 400,940 405,950 385,965 405,990 390,1010 388,1045 335,1055 300,1045 245,1065 235,1075 210,1035 205,990 200,955 165,935 125,925 150,890 165,850"],
  ["N", "M", "285,850 300,840 345,828 360,800 362,778 400,770 440,770 452,800 450,818 495,818 535,810 545,840 557,860 540,885 540,905 520,920 530,960 515,980 490,975 460,958 430,955 400,940 350,935 325,940 290,912"],
  ["N", "O", "548,765 580,758 612,755 640,765 648,800 670,815 700,870 760,868 770,885 765,920 735,985 732,1025 715,1020 690,1010 665,1000 630,975 620,985 585,985 540,965 520,925 540,905 540,885 557,860 545,840 530,810 545,795"],
  ["N", "O", "760,870 785,860 808,858 820,845 850,850 880,895 882,925 905,935 945,952 960,942 975,950 978,985 970,1000 980,1035 970,1070 945,1105 935,1120 840,1140 810,1120 755,1085 735,1050 730,1020 735,985 765,920 770,885"],
  ["N", "O", "1008,895 1040,860 1065,855 1080,840 1095,855 1145,860 1165,870 1180,865 1205,885 1197,910 1205,955 1190,970 1150,970 1110,990 1060,1030 1005,1038 980,1032 972,1010 978,975 960,940 1005,925"],

  ["E", "M", "780,165 810,155 845,138 885,98 940,95 965,85 985,90 995,110 985,130 1010,132 990,165 960,200 950,220 912,242 912,285 860,340 845,325 868,290 825,250 795,225 795,200"],
  ["E", "M", "740,162 775,168 795,195 790,225 825,245 865,290 848,320 860,350 850,385 825,415 800,430 770,425 745,430 715,385 725,372 720,320 730,275 703,238 725,210"],
  ["W", "M", "982,440 1010,440 1020,430 1055,418 1095,425 1100,440 1130,450 1135,480 1140,520 1160,525 1178,560 1165,590 1125,595 1112,660 1095,662 1075,640 1050,620 1035,618 995,622 975,590 950,565 950,545 970,490"],
  ["E", "M", "285,98 320,95 345,115 380,118 390,100 430,138 460,138 475,155 490,155 497,185 515,192 510,208 490,240 490,295 440,320 410,310 385,330 350,318 330,320 305,298 310,240 300,180 278,155"],
  ["E", "M", "150,85 170,80 195,85 230,105 245,115 280,112 278,155 300,185 310,240 305,300 270,310 230,330 228,365 175,380 168,390 150,385 155,355 140,320 145,290 135,240 130,215 90,200 105,182 148,170 150,145 165,120"],
  ["E", "A", "5,190 50,172 95,185 90,205 130,212 140,250 138,290 145,330 155,390 80,400 60,402 15,410 -25,390 -30,370 -70,340 -75,305 -58,300 -45,235 -10,230"],
  ["W", "M", "785,592 840,585 850,572 890,565 922,568 930,580 930,610 940,630 935,690 935,720 945,765 958,770 955,800 970,825 940,845 912,858 870,835 800,790 800,765 832,748 822,740 820,660 800,620"],
  ["W", "M", "922,568 945,552 960,560 965,570 985,580 995,610 1040,605 1045,595 1060,605 1095,660 1100,690 1145,745 1140,760 1085,800 1080,830 1030,835 965,828 950,805 960,770 940,765 930,720 930,690 940,630 930,600"],
  ["W", "O", "555,600 585,570 600,582 640,605 665,613 668,575 678,572 680,600 695,598 700,575 715,563 740,580 785,590 800,620 820,660 822,740 830,748 820,765 800,765 760,760 735,765 712,768 690,758 665,740 635,728 608,700 605,680 590,655 580,640 558,620"],
  ["W", "O", "530,568 545,570 545,580 556,598 548,592 535,578"],
  ["W", "O", "510,642 520,643 527,650 518,650"],
  ["E", "M", "172,390 178,370 225,362 230,320 270,305 305,297 330,320 350,318 385,330 410,308 440,350 478,385 470,430 445,445 445,505 420,512 375,490 330,485 280,470 225,470 210,430 175,405"],
  ["E", "M", "10,405 60,392 80,385 150,385 170,390 180,410 210,430 222,465 225,505 190,550 205,580 190,590 150,580 125,575 100,578 95,555 55,540 35,515 30,475 10,440"],
  ["S", "M", "570,75 600,50 660,38 680,45 670,80 690,130 695,152 710,150 715,175 755,190 758,218 700,255 650,285 600,260 560,250 535,210 555,190 570,160 585,145 570,120"],
  ["S", "G", "410,340 440,330 460,315 458,285 500,260 510,235 535,215 550,222 555,240 600,240 625,270 645,280 650,310 645,340 665,375 672,430 605,500 560,490 510,485 460,480 455,440 410,430 415,370"],
  ["S", "M", "650,275 700,248 760,218 790,205 830,215 845,225 865,215 870,290 860,300 845,310 815,345 800,380 790,410 740,415 705,395 670,392 660,365 640,345 640,325 650,310"],
  ["E", "T", "225,470 245,470 262,440 285,437 295,462 330,480 375,485 395,498 425,510 435,530 430,565 445,595 475,625 465,665 420,670 385,665 330,670 300,685 270,665 210,645 205,600 212,575 190,548 225,510"],
  ["E", "G", "440,440 462,430 465,445 480,455 525,455 552,450 545,480 550,540 560,590 600,610 620,640 617,660 600,680 575,695 550,690 545,672 470,670 478,635 445,595 428,555 435,515 445,505"],
  ["E", "G", "552,430 580,440 605,430 618,445 618,515 645,540 690,570 665,600 635,610 635,625 618,640 615,625 598,625 600,610 570,605 550,600 552,560 540,535 530,510 525,490 535,465 552,460"],
  ["E", "T", "485,215 515,205 560,230 600,262 620,248 655,248 690,243 705,240 710,262 735,275 718,280 730,320 720,345 728,372 700,378 690,375 645,375 635,400 622,450 610,445 600,425 580,435 560,425 550,430 550,450 525,455 480,455 462,430 475,405 475,380 435,365 430,345 415,310 440,315 490,295 490,240"],
  ["E", "O", "645,368 670,372 690,368 712,380 725,400 745,425 770,408 785,420 800,425 825,415 840,385 865,390 865,400 855,425 835,435 830,455 808,468 805,500 800,560 778,592 730,535 710,560 680,550 645,540 618,515 616,470 625,440"],
  ["E", "T", "680,548 710,552 725,525 735,535 760,560 778,595 798,635 830,645 835,625 860,632 880,645 875,705 895,712 890,740 912,755 915,785 850,805 815,835 755,810 755,745 705,745 695,700 665,680 628,685 620,675 625,660 618,640 635,625 630,608 665,595 688,570"],
  ["E", "M", "318,685 345,662 370,655 385,652 390,662 420,668 430,660 470,665 515,658 545,662 550,680 570,700 555,740 520,795 480,810 462,822 415,805 385,810 365,775 350,730 350,700"],
  ["E", "A", "130,770 150,715 185,680 180,655 205,660 212,642 230,645 270,662 305,685 320,682 350,700 355,730 368,768 320,800 300,845 285,840 265,800 250,800 205,855 150,858 145,820"],
  ["S", "M", "670,395 700,388 740,415 790,405 800,420 805,450 800,470 810,495 760,535 752,550 758,580 700,595 655,605 620,580 595,550 590,510 605,500 630,470 670,430"],
  ["S", "O", "400,138 420,110 445,105 500,118 510,100 520,115 560,100 568,125 585,140 570,160 545,200 525,222 510,235 500,260 462,280 460,315 435,333 415,330 360,305 362,285 365,250 345,235 345,190 385,185 398,160"],
  ["S", "G", "205,75 215,50 230,35 245,38 270,40 285,45 290,65 350,100 400,135 395,160 388,185 340,190 345,235 370,255 362,300 410,335 405,360 380,362 340,345 330,315 285,300 275,270 265,250 230,225 192,200 192,175 205,170 222,150 225,110 215,90"],
  ["S", "G", "140,58 155,55 160,65 190,78 180,80 155,68"],
  ["S", "G", "165,108 188,122 195,145 200,155 195,168 185,145 170,130"],
  ["S", "T", "220,235 240,258 265,285 275,322 285,322 282,298 310,302 335,315 345,345 385,362 420,362 412,395 405,430 435,438 462,428 460,450 430,470 435,485 405,515 400,560 385,590 375,595 350,595 330,590 325,575 285,540 255,535 215,530 205,515 172,515 172,495 183,482 185,473 217,468 195,442 173,475 185,395 200,300 203,250"],
  ["S", "M", "172,515 205,505 220,520 240,530 285,530 305,550 325,565 330,588 350,592 360,580 380,605 422,620 410,655 385,665 360,680 355,720 345,755 300,765 250,762 205,770 110,760 125,730 150,620 165,545"],
  ["S", "O", "425,465 455,455 470,465 470,480 510,475 555,478 565,495 585,492 595,520 598,555 570,565 572,600 545,640 510,645 455,652 415,655 425,620 380,605 380,590 390,580 385,560 400,555 405,510 430,490"],
  ["S", "M", "360,668 405,655 410,672 415,655 455,650 505,638 520,635 550,645 545,670 560,675 565,705 585,720 620,762 590,785 580,815 540,815 510,830 460,820 420,800 385,760 345,750 350,720 360,710"],
  ["S", "A", "570,560 580,560 605,555 620,580 640,580 655,600 685,592 700,590 750,572 762,605 765,615 715,640 695,685 655,695 630,710 570,708 570,690 545,665 555,645 540,630 575,600"],
  ["S", "O", "750,540 805,500 815,490 865,488 885,450 910,420 920,432 935,435 945,480 960,495 982,540 985,600 1020,615 1015,630 1040,655 1030,685 975,715 960,745 900,735 870,700 840,655 800,625 765,615 765,600 750,575"],
  ["S", "G", "580,710 625,710 650,690 690,682 715,735 715,750 775,790 765,808 740,815 720,855 690,870 600,890 555,920 548,955 515,955 515,988 475,988 478,945 500,925 495,895 480,875 510,830 540,810 580,815 590,780 620,762"],
  ["S", "O", "710,630 765,618 800,610 850,640 870,670 880,705 900,728 930,725 945,735 940,750 900,765 890,790 875,812 810,815 780,812 770,785 740,765 715,750 715,735 690,680 710,650"],
  ["R", "D", "117,245 130,200 145,185 165,188 185,172 195,175 205,205 235,192 250,200 265,205 280,222 285,255 300,290 297,310 297,375 270,378 235,385 185,375 150,350 145,320 140,270"],
  ["R", "O", "280,220 300,200 340,188 360,170 360,150 380,130 390,95 410,90 440,65 448,80 462,180 450,210 445,260 430,275 425,345 395,335 352,350 318,340 310,300 300,295 285,255"],
  ["R", "M", "448,82 485,70 515,90 520,135 560,140 572,135 575,205 635,230 605,240 608,275 575,290 578,310 610,320 618,360 585,385 525,365 520,345 460,355 427,335 430,275 445,260 450,210 462,180"],
  ["R", "A", "468,332 475,310 485,303 502,318 488,335"],
  ["R", "D", "710,120 735,125 750,130 762,118 780,115 808,145 810,175 830,182 855,182 868,220 845,235 795,298 735,290 720,315 695,300 660,335 655,360 620,365 610,320 575,310 575,290 608,278 605,240 635,230 665,200 735,185 730,155 712,145"],
  ["R", "D", "848,235 850,260 835,275 845,290 840,305 810,350 820,390 855,425 815,455 750,475 725,470 688,490 670,482 635,480 600,455 605,430 590,390 615,365 655,355 645,345 665,320 675,300 695,285 720,305 725,285 740,275 760,285 795,288 820,260"],
  ["R", "A", "425,332 455,335 460,350 520,338 525,352 560,358 585,378 595,400 590,420 605,430 600,455 635,480 620,498 540,495 470,450 445,438 462,410 440,390"],
  ["R", "O", "430,460 445,435 470,440 500,465 540,482 565,485 600,500 638,485 640,495 625,515 640,555 628,570 638,600 625,622 605,622 595,618 565,615 560,585 500,587 490,568 470,570 468,585 415,580 415,560 350,555 385,520 400,495 425,495"],
  ["R", "W", "497,530 505,538 515,540 525,550 540,550 530,562 520,568 505,560 497,545"],
  ["R", "M", "640,482 670,475 688,490 725,460 750,470 780,458 805,455 812,440 840,425 860,435 890,433 905,445 907,455 895,515 865,515 855,550 830,552 795,590 818,592 808,620 760,625 755,638 740,640 712,645 700,640 660,650 628,628 638,600 628,570 640,555 625,510 640,490"],
  ["R", "M", "722,664 735,662 728,668"],
  ["R", "M", "762,663 768,660 766,664"],
  ["R", "M", "781,653 785,651 783,654"],
  ["R", "O", "182,388 170,395 202,412 185,440 215,460 262,440 300,465 343,510 330,530 335,550 350,550 385,520 400,495 425,495 430,460 445,435 462,410 440,390 425,345 395,330 385,340 375,330 360,335 352,347 318,335 310,305 295,315 297,375 270,380 240,375 235,388 215,385 185,375"],
  ["R", "O", "50,510 75,515 105,505 108,495 130,490 130,462 165,462 185,445 215,455 240,440 250,445 262,428 275,435 275,445 300,455 340,490 342,515 330,530 300,540 260,570 240,580 215,603 195,605 165,620 125,605 95,590 75,610 55,600 35,585 55,550"],
  ["S", "A", "385,752 395,755 400,765 415,780 420,800 460,815 490,825 510,830 480,875 505,915 500,940 478,945 475,988 440,985 415,980 385,988 360,960 328,930 335,905 355,880 385,840 380,820 395,800 385,775"],
  ["S", "G", "110,758 140,765 175,760 180,768 205,765 250,755 285,762 310,752 345,758 378,752 385,775 388,790 390,820 380,855 350,885 330,910 328,940 300,955 285,955 245,920 245,910 205,908 140,880 125,885 112,872 128,850 125,828 95,820 55,797 90,785"],
  ["S", "A", "368,822 378,818 380,830 370,842 365,832"],
  ["S", "A", "550,930 580,910 578,895 590,880 610,875 625,888 635,880 620,870 640,860 645,835 660,852 680,858 690,848 715,850 740,885 760,890 765,940 745,965 800,1002 755,1010 720,1025 665,1010 660,1015 650,990 625,980 595,965 555,960"],
  ["S", "M", "715,848 735,820 740,810 800,812 830,803 875,808 880,830 910,850 920,835 935,825 950,835 1005,858 980,890 970,920 967,965 930,960 835,970 825,1000 803,1002 780,980 750,965 765,935 760,890 740,875 720,865"],
  ["S", "D", "718,1030 740,1018 770,1008 800,1003 830,990 832,958 865,958 915,955 930,940 965,955 968,1020 980,1045 990,1062 960,1055 930,1055 900,1075 895,1085 870,1088 850,1072 820,1065 790,1080 770,1082 762,1058 735,1048 718,1042"],
  ["S", "W", "762,1050 768,1048 766,1062"],
  ["C", "A", "187,30 203,28 205,60 212,75 210,105 228,140 232,195 242,230 240,262 218,300 220,375 205,390 215,395 200,440 190,452 170,432 135,425 108,405 105,385 125,378 85,365 100,345 100,320 68,322 65,308 85,290 80,272 55,262 52,240 72,228 47,205 65,190 75,150 110,130 135,122 155,102 180,110 188,100 185,60"],
];

/* Inland zone, well inside the coast and the frontier. */
const INLAND =
  "1090,184 1127,175 1151,202 1182,227 1218,245 1228,276 1255,272 1273,294 1298,312 1347,316 1408,345 1442,345 1423,404 1418,465 1390,468 1359,514 1329,563 1329,618 1316,631 1347,667 1347,692 1371,688 1396,716 1384,735 1390,778 1414,796 1378,839 1341,845 1298,830 1243,814 1206,818 1157,845 1153,900 1096,900 1041,876 980,879 943,867 876,823 904,729 918,710 911,665 925,688 943,678 944,660 920,618 924,588 912,563 869,533 876,514 872,472 802,447 747,422 735,398 735,367 790,355 833,392 900,384 912,367 900,294 931,325 1004,322 1016,294 1078,263 1090,233";

type Pt = [number, number];
const SNAP = 4.2;
const dist = (a: Pt, b: Pt) => Math.hypot(a[0] - b[0], a[1] - b[1]);
const parse = (sheet: string, text: string): Pt[] => {
  const [ox, oy] = SHEET[sheet];
  return text.split(" ").map((s) => {
    const [x, y] = s.split(",").map(Number);
    return [ox + x / 3, oy + y / 3] as Pt;
  });
};
/* Position of p projected on the segment a-b: fraction along it, foot, distance. */
const project = (p: Pt, a: Pt, b: Pt) => {
  const dx = b[0] - a[0];
  const dy = b[1] - a[1];
  const t = ((p[0] - a[0]) * dx + (p[1] - a[1]) * dy) / (dx * dx + dy * dy || 1);
  const foot: Pt = [a[0] + t * dx, a[1] + t * dy];
  return { t, foot, d: dist(p, foot) };
};
const isLarge = (r: Pt[], cls: string) => {
  const xs = r.map((p) => p[0]);
  return cls !== "W" && Math.max(...xs) - Math.min(...xs) > 22;
};
/* Join neighbouring areas: vertices of an area move onto the vertices or edges of
   the areas painted after it, and both sides end up with the same vertex list. */
const stitch = (rings: Pt[][], large: boolean[]) => {
  for (let i = rings.length - 2; i >= 0; i--) {
    if (!large[i]) continue;
    rings[i] = rings[i].map((v) => {
      let best = SNAP;
      let hit: Pt | null = null;
      for (let j = i + 1; j < rings.length; j++) {
        if (!large[j]) continue;
        for (const w of rings[j]) {
          const d = dist(v, w);
          if (d < best) { best = d; hit = w; }
        }
      }
      if (hit) return hit;
      let at: [number, number] | null = null;
      best = SNAP;
      for (let j = i + 1; j < rings.length; j++) {
        if (!large[j]) continue;
        rings[j].forEach((a, k) => {
          const q = project(v, a, rings[j][(k + 1) % rings[j].length]);
          if (q.t > 0 && q.t < 1 && q.d < best) { best = q.d; hit = q.foot; at = [j, k]; }
        });
      }
      if (hit && at) {
        rings[at[0]].splice(at[1] + 1, 0, hit);
        return hit;
      }
      return v;
    });
  }
  for (let i = rings.length - 2; i >= 0; i--) {
    if (!large[i]) continue;
    const out: Pt[] = [];
    const own = new Set(rings[i].map(String));
    rings[i].forEach((a, k) => {
      const b = rings[i][(k + 1) % rings[i].length];
      if (String(a) === String(b)) return;
      out.push(a);
      const add: { t: number; p: Pt }[] = [];
      for (let j = i + 1; j < rings.length; j++) {
        if (!large[j]) continue;
        for (const w of rings[j]) {
          if (own.has(String(w))) continue;
          const q = project(w, a, b);
          if (q.t > 0.02 && q.t < 0.98 && q.d < SNAP) {
            own.add(String(w));
            add.push({ t: q.t, p: w });
          }
        }
      }
      add.sort((m, n) => m.t - n.t).forEach((m) => out.push(m.p));
    });
    rings[i] = out;
  }
};

const noise = (a: number, b: number) => {
  const v = Math.sin(a * 12.9898 + b * 78.233) * 43758.5453;
  return v - Math.floor(v) - 0.5;
};
/* Midpoint displacement; the offset depends only on the midpoint, so a border
   shared by two areas is roughened the same way on both sides. */
const roughen = (a: Pt, b: Pt, out: Pt[]) => {
  const len = dist(a, b);
  if (len < 2.4) {
    out.push(b);
    return;
  }
  const mx = Math.round(((a[0] + b[0]) / 2) * 1000) / 1000;
  const my = Math.round(((a[1] + b[1]) / 2) * 1000) / 1000;
  const k = Math.min(len * 0.4, 2.6);
  const m: Pt = [mx + noise(mx, my) * k, my + noise(my, mx) * k];
  roughen(a, m, out);
  roughen(m, b, out);
};
const toPath = (pts: Pt[]) => {
  const out: Pt[] = [];
  pts.forEach((p, i) => roughen(p, pts[(i + 1) % pts.length], out));
  return "M" + out.map((p) => `${p[0].toFixed(1)} ${p[1].toFixed(1)}`).join("L") + "Z";
};
const RINGS = AREAS.map(([s, , t]) => parse(s, t));
const LARGE = RINGS.map((r, i) => isLarge(r, AREAS[i][1]));
stitch(RINGS, LARGE);
const PATHS = RINGS.map((r, i) => ({ d: toPath(r), fill: FILL[AREAS[i][1]], large: LARGE[i] }));

/* ------------------------------------------------------------------ */
/* Layout                                                               */
/* ------------------------------------------------------------------ */
const Window = styled.div`
  width: 1920px;
  height: 1040px;
  display: flex;
  flex-direction: column;
  background: ${C.window};
  overflow: hidden;
`;
const TitleBar = styled.header`
  height: 24px;
  flex: none;
  background: #fff;
  display: flex;
  align-items: center;
  padding: 0 19px 2px 2px;
  gap: 5px;
  letter-spacing: -0.48px;
`;
const WindowButtons = styled.div`
  margin-left: auto;
  display: flex;
  gap: 35px;
  svg { width: 11px; height: 11px; }
`;
const MenuBar = styled.nav`
  height: 20px;
  flex: none;
  background: #fff;
  border-bottom: 1px solid #f0f0f0;
  display: flex;
  align-items: center;
  padding-left: 8px;
`;
const MenuItem = styled.span<{ $w: number }>`
  width: ${(p) => p.$w}px;
  white-space: nowrap;
`;
const ToolRow = styled.div`
  height: 34px;
  flex: none;
  display: flex;
  align-items: stretch;
  border-bottom: 2px solid ${C.line};
`;
const Group = styled.div<{ $w?: number }>`
  display: flex;
  align-items: center;
  width: ${(p) => (p.$w ? `${p.$w}px` : "auto")};
  border-right: ${(p) => (p.$w ? `2px solid ${C.line}` : "none")};
`;
const Grip = styled.i`
  width: 3px;
  height: 26px;
  margin: 0 3px;
  flex: none;
  background: radial-gradient(circle at 1.500px 1.500px, #b0b0b0 1.200px, transparent 1.500px) 0 0 / 3px 4.500px;
`;
const Tool = styled.button<{ $on?: boolean }>`
  all: unset;
  width: 31px;
  height: 30px;
  flex: none;
  display: grid;
  place-items: center;
  ${(p) => p.$on && css`background: #c3dcf2; box-shadow: inset 0 0 0 1px #90c8f6;`}
`;
const Caret = styled.i<{ $dim?: boolean }>`
  width: 12px;
  flex: none;
  display: grid;
  place-items: center;
  &::after {
    content: "";
    border: 3.500px solid transparent;
    border-top: 4px solid ${(p) => (p.$dim ? "#777" : "#222")};
    border-bottom: 0;
  }
`;

/* "name" draws a tool, "~name" a disabled tool, "*name" a checked tool, "v"/"~v" a menu arrow */
const Tools = ({ items, size = 23 }: { items: string[]; size?: number }) => (
  <>
    {items.map((it, i) => {
      const dim = it[0] === "~";
      const on = it[0] === "*";
      const name = dim || on ? it.slice(1) : it;
      return name === "v" ? <Caret key={i} $dim={dim} /> : (
        <Tool key={i} $on={on}>
          <Icon name={name} size={size} dim={dim} />
        </Tool>
      );
    })}
  </>
);

const Body = styled.main`
  flex: 1;
  min-height: 0;
  display: flex;
`;
const Rail = styled.aside`
  width: 47px;
  height: 866px;
  flex: none;
  border-right: 1px solid ${C.line};
  border-bottom: 1px solid ${C.line};
  display: flex;
  flex-direction: column;
  padding-top: 4px;
`;
const RailGrip = styled.i`
  width: 40px;
  height: 3px;
  margin: 0 0 3px 3px;
  background: radial-gradient(circle at 1.500px 1.500px, #b0b0b0 1.200px, transparent 1.500px) 0 0 / 4.500px 3px;
`;
const RailRow = styled.div`
  height: 30px;
  display: flex;
  align-items: center;
  padding-left: 5px;
  gap: 3px;
`;
const Dock = styled.section`
  width: 303px;
  flex: none;
  display: flex;
  flex-direction: column;
`;
const DockTitle = styled.h2`
  height: 25px;
  margin: 0;
  flex: none;
  background: ${C.title};
  border: 1px solid ${C.line};
  font: inherit;
  display: flex;
  align-items: center;
  padding: 1px 5px 0;
  gap: 8px;
  span { flex: 1; }
`;
const DockTools = styled.div<{ $gap?: number }>`
  height: 28px;
  flex: none;
  display: flex;
  align-items: center;
  padding: 2px 0 0 6px;
  gap: ${(p) => p.$gap ?? 9}px;
  ${Caret} { width: 8px; margin: 0 -3.500px; }
`;
const Divider = styled.i`
  width: 1px;
  height: 16px;
  background: #c8c8c8;
  margin: 0 -1.500px;
`;
const Frame = styled.div<{ $h: number }>`
  height: ${(p) => p.$h}px;
  flex: none;
  background: #fff;
  border: 1px solid ${C.frame};
  display: flex;
  overflow: hidden;
`;
const Tree = styled.div`
  flex: 1;
`;
const TreeRow = styled.div<{ $h?: number; $pad?: number; $bold?: boolean }>`
  height: ${(p) => p.$h ?? 20}px;
  display: flex;
  align-items: center;
  padding-left: ${(p) => p.$pad ?? 0}px;
  font-weight: ${(p) => (p.$bold ? 700 : 400)};
  letter-spacing: ${(p) => (p.$bold ? "0" : "-0.32px")};
  white-space: pre;
`;
const TreeArrow = styled.span<{ $w?: number }>`
  width: ${(p) => p.$w ?? 23}px;
  flex: none;
  display: grid;
  place-items: center;
  padding-right: 4px;
`;
const Label = styled.span`
  margin-left: 6px;
`;
const Check = styled.i<{ $m?: number }>`
  width: 13px;
  height: 13px;
  flex: none;
  margin-right: ${(p) => p.$m ?? 6}px;
  border: 1px solid #222;
  background: #fff;
  display: grid;
  place-items: center;
`;
const Tick = () => (
  <svg width="11" height="11" viewBox="0 0 11 11">
    <path d="M1.500 5.500l3 3 5-6" fill="none" stroke="#222" strokeWidth="1.200" />
  </svg>
);
const Swatch = styled.i<{ $c: string }>`
  width: 18px;
  height: 18px;
  flex: none;
  background: ${(p) => p.$c};
  border: 1px solid #00000066;
`;
const LegendRow = styled(TreeRow)<{ $hover?: boolean }>`
  margin-left: 40px;
  padding-left: 3px;
  letter-spacing: -0.53px;
  word-spacing: 0.5px;
  background: ${(p) => (p.$hover ? "#e5f3ff" : "transparent")};
`;
const Selected = styled.div`
  flex: 1;
  height: 20px;
  background: #cce8ff;
  display: flex;
  align-items: center;
  padding-left: 3px;
`;
const Focus = styled.div`
  flex: 1;
  height: 20px;
  margin-right: 1px;
  border: 1px dotted #111;
  display: flex;
  align-items: center;
  color: #666f78;
  font-style: italic;
  font-weight: 700;
  letter-spacing: 0.16px;
  span { text-decoration: underline; }
`;
const ScrollBar = styled.div`
  width: 16px;
  background: #f0f0f0;
  display: flex;
  flex-direction: column;
  align-items: center;
  justify-content: space-between;
  padding: 5px 0;
`;
const Thumb = styled.i`
  width: 15px;
  height: 133px;
  background: #cdcdcd;
  margin: 3px 0 auto;
`;
const Gap = styled.div<{ $h: number }>`
  height: ${(p) => p.$h}px;
  flex: none;
`;
const Note = styled.p`
  margin: 56px 0 0;
  padding: 0 4px 0 0;
  font-size: 11px;
  line-height: 13px;
  letter-spacing: -0.33px;
  text-align: center;
`;
const MapFrame = styled.div`
  margin-left: 4px;
  width: 1566px;
  height: 866px;
  background: #fff;
  border: 1px solid ${C.frame};
  overflow: hidden;
`;
const StatusBar = styled.footer`
  height: 28px;
  flex: none;
  display: flex;
  align-items: center;
  padding: 0 8px 1px 4px;
  font-size: 11px;
  letter-spacing: -0.25px;
`;
const Box = styled.div<{ $w: number; $center?: boolean }>`
  width: ${(p) => p.$w}px;
  height: 20px;
  flex: none;
  background: #fff;
  border: 1px solid #7a7a7a;
  display: flex;
  align-items: center;
  justify-content: ${(p) => (p.$center ? "center" : "space-between")};
  padding: 0 ${(p) => (p.$center ? 3 : 2)}px 0 4px;
`;
const SearchBox = styled(Box)`
  justify-content: flex-start;
  gap: 6px;
  padding-left: 8px;
  color: #777;
  font-size: 11.500px;
  letter-spacing: -0.4px;
`;
const Caption = styled.span<{ $w: number }>`
  width: ${(p) => p.$w}px;
  flex: none;
  white-space: nowrap;
`;
const Slot = styled.span<{ $w: number }>`
  width: ${(p) => p.$w}px;
  flex: none;
  display: grid;
  place-items: center;
`;
const Spinner = styled.span`
  width: 13px;
  height: 16px;
  background: #e6e6e6;
  border: 1px solid #aaa;
  display: grid;
  place-items: center;
`;

const Chevron = ({ dir, color = "#444" }: { dir: "up" | "down" | "right"; color?: string }) => {
  const d = { up: "M1 6.500L4.500 3 8 6.500", down: "M1 3l3.500 3.500L8 3", right: "M3 1l3.500 3.500L3 8" }[dir];
  return (
    <svg width="9" height="9" viewBox="0 0 9 9">
      <path d={d} fill="none" stroke={color} strokeWidth="1.700" />
    </svg>
  );
};
const Spin = () => (
  <Spinner>
    <svg width="7" height="12" viewBox="0 0 7 12">
      <path d="M3.500 1L6 4H1zM3.500 11L6 8H1z" fill="#111" />
    </svg>
  </Spinner>
);

const MENU: [string, number][] = [
  ["Projet", 47.5], ["Éditer", 45.5], ["Vue", 36.5], ["Couche", 56.5], ["Préférences", 77],
  ["Extension", 66], ["Vecteur", 55], ["Raster", 48], ["Base de données", 104], ["Internet", 57],
  ["Maillage", 61.5], ["MMQGIS", 64.5], ["Traitement", 72], ["Aide", 40],
];
const RAIL: [string, boolean][] = [
  ["addVector", false], ["addRaster", false], ["addMesh", false], ["addText", false],
  ["addSpatialite", false], ["addVirtual", false], ["addPostgis", true], ["addWms", true],
  ["addWcs", false], ["addWfs", true], ["addChip", true],
];
const LEGEND: [string, string][] = [
  ["D", "130 000 - 160 000"], ["A", "160 000 - 260 000"], ["M", "260 000 - 330 000"],
  ["O", "330 000 - 400 000"], ["G", "400 000 - 500 000"], ["T", "500 000 - 720 000"],
  ["E", "720 000 - 1 110 000"],
];
const BROWSER: [string, string, string][] = [
  ["", "star", "Marque-pages"], ["right", "home", "Accueil"], ["right", "folder", "C:\\"],
  ["right", "folder", "E:\\"], ["right", "folder", "F:\\"], ["", "geopackage", "GeoPackage"],
  ["", "feather", "SpatiaLite"], ["", "elephant", "PostGIS"], ["", "mssql", "MSSQL"],
  ["", "oracle", "Oracle"], ["", "db2", "DB2"], ["", "globe", "WMS/WMTS"], ["down", "globe", "XYZ Tiles"],
];

const DockHeader = ({ title }: { title: string }) => (
  <DockTitle>
    <span>{title}</span>
    <Icon name="float" size={13} />
    <Icon name="close" size={12} />
  </DockTitle>
);

export default function App() {
  return (
    <>
      <Global />
      <Window>
        <TitleBar>
          <Icon name="logo" size={16} />
          <span>*PopDep1836_exos - QGIS</span>
          <WindowButtons>
            <svg viewBox="0 0 11 11"><path d="M0 5.500h10" stroke="#000" /></svg>
            <svg viewBox="0 0 11 11"><path d="M.500 2.500h7.500v8H.500zM2.500 2.500v-2h8v8H8" fill="none" stroke="#000" /></svg>
            <svg viewBox="0 0 11 11"><path d="M.500.500l10 10M10.500.500l-10 10" stroke="#000" /></svg>
          </WindowButtons>
        </TitleBar>
        <MenuBar>
          {MENU.map(([t, w]) => <MenuItem key={t} $w={w}>{t}</MenuItem>)}
        </MenuBar>

        <ToolRow>
          <Group $w={198.5}>
            <Grip />
            <Tools items={["file", "open", "save", "layout", "layoutManager", "styles"]} />
          </Group>
          <Group $w={446}>
            <Grip />
            <Tools items={["*hand", "panTo", "zoomIn", "zoomOut", "~zoomOne", "zoomFull", "zoomSelection", "zoomLayer", "~zoomLast", "~zoomNext", "view", "bookmarkNew", "bookmark", "refresh"]} />
          </Group>
          <Group>
            <Grip />
            <Tools items={["identify", "~action", "~v", "select", "v", "form", "v", "deselect", "table", "abacus", "gear", "sigma", "ruler", "v", "tip", "annotation", "v"]} />
          </Group>
        </ToolRow>
        <ToolRow>
          <Group $w={396}>
            <Grip />
            <Tools items={["~pencils", "~pencil", "~saveEdits", "~addFeature", "~vertex", "~v", "~editAttributes", "~trash", "~cut", "~copy", "~paste", "~undo", "~redo"]} />
          </Group>
          <Group $w={261}>
            <Grip />
            <Tools items={["label", "diagram", "pinLabel", "~labelPin", "~labelShow", "~labelMove", "~labelRotate", "~labelEdit"]} />
          </Group>
          <Group $w={43}><Grip /><Tools items={["metasearch"]} /></Group>
          <Group $w={43}><Grip /><Tools items={["python"]} /></Group>
          <Group $w={43}><Grip /><Tools items={["book"]} /></Group>
          <Group><Grip /></Group>
        </ToolRow>
        <ToolRow>
          <Group><Grip /><Tools items={["sort"]} /></Group>
        </ToolRow>

        <Body>
          <Rail>
            <RailGrip />
            {RAIL.map(([name, menu]) => (
              <RailRow key={name}>
                <Icon name={name} size={24} />
                {menu && <Caret />}
              </RailRow>
            ))}
          </Rail>

          <Dock>
            <Gap $h={1} />
            <DockHeader title="Couches" />
            <DockTools>
              <Icon name="brush" size={14} />
              <Icon name="addGroup" size={14} />
              <Icon name="eye" size={15} />
              <Icon name="filter" size={14} />
              <Icon name="epsilon" size={15} />
              <Caret />
              <Icon name="expand" size={14} />
              <Icon name="collapse" size={14} />
              <Icon name="remove" size={14} />
            </DockTools>
            <Frame $h={298}>
              <Tree>
                <TreeRow $pad={24} $bold><Icon name="sheet" size={15} /><Label>rec_t07V139_pop1836</Label></TreeRow>
                <TreeRow $bold>
                  <TreeArrow><Chevron dir="down" /></TreeArrow>
                  <Check><Tick /></Check>
                  <Icon name="poly" size={16} />
                  <Label>fr dpts 1815-1860 v1920</Label>
                </TreeRow>
                {LEGEND.map(([c, t]) => (
                  <LegendRow key={c} $h={22} $pad={3} $hover={c === "T"}>
                    <Check><Tick /></Check>
                    <Swatch $c={FILL[c]} />
                    <Label>{t}</Label>
                  </LegendRow>
                ))}
                <TreeRow $bold>
                  <TreeArrow $w={20}><Chevron dir="right" color="#999" /></TreeArrow>
                  <Selected>
                    <Check $m={5} />
                    <Focus><Icon name="polyBlue" size={16} /><Label>fr dpts 1815-1860 v1920 copier</Label></Focus>
                  </Selected>
                </TreeRow>
              </Tree>
            </Frame>
            <Gap $h={5} />
            <DockHeader title="Explorateur" />
            <DockTools>
              <Icon name="addSel" size={14} />
              <Icon name="refresh" size={14} />
              <Icon name="filter" size={14} />
              <Icon name="collapse" size={14} />
              <Icon name="info" size={14} />
            </DockTools>
            <Frame $h={258}>
              <Tree>
                {BROWSER.map(([arrow, icon, text]) => (
                  <TreeRow key={text}>
                    <TreeArrow>
                      {arrow === "right" && <Chevron dir="right" color="#999" />}
                      {arrow === "down" && <Chevron dir="down" />}
                    </TreeArrow>
                    <Icon name={icon} size={16} />
                    <Label>{text}</Label>
                  </TreeRow>
                ))}
              </Tree>
              <ScrollBar><Chevron dir="up" /><Thumb /><Chevron dir="down" /></ScrollBar>
            </Frame>
            <Gap $h={6} />
            <DockHeader title="Numérisation avancée" />
            <DockTools $gap={8}>
              <Icon name="cad" size={15} dim />
              <Divider />
              <Icon name="construct" size={15} dim />
              <Icon name="parallel" size={15} dim />
              <Icon name="perpendicular" size={15} dim />
              <Divider />
              <Icon name="cog" size={15} dim />
            </DockTools>
            <Note>Les outils CAD ne sont pas activés pour l'outil actuellement<br />sélectionné</Note>
          </Dock>

          <MapFrame>
            <svg width="1564" height="864" viewBox="355 147 1564 864">
              <clipPath id="inland"><polygon points={INLAND} /></clipPath>
              <g clipPath="url(#inland)" strokeWidth="12">
                {PATHS.filter((p) => p.large).map((p, i) => <path key={i} d={p.d} fill={p.fill} stroke={p.fill} />)}
              </g>
              <g stroke="#2a2a2a" strokeWidth=".9" strokeLinejoin="round">
                {PATHS.map((p, i) => <path key={i} d={p.d} fill={p.fill} />)}
              </g>
            </svg>
          </MapFrame>
        </Body>

        <StatusBar>
          <SearchBox $w={241}><Icon name="search" size={13} /><span>Taper pour trouver (Ctrl+K)</span></SearchBox>
          <Slot $w={893} />
          <Caption $w={63.5}>Coordonnée</Caption>
          <Box $w={103} $center>656636,6050168</Box>
          <Slot $w={22}><Icon name="mouse" size={15} /></Slot>
          <Slot $w={9} />
          <Caption $w={37}>Échelle</Caption>
          <Box $w={79}>1:4866959<Chevron dir="down" color="#666" /></Box>
          <Slot $w={30}><Icon name="lock" size={14} /></Slot>
          <Caption $w={33.5}>Loupe</Caption>
          <Box $w={81}>100%<Spin /></Box>
          <Slot $w={9} />
          <Caption $w={51}>Rotation</Caption>
          <Box $w={79}>0,0 °<Spin /></Box>
          <Slot $w={7} />
          <Check $m={4}><Tick /></Check>
          <Caption $w={47}>Rendu</Caption>
          <Slot $w={18}><Icon name="crs" size={15} /></Slot>
          <Slot $w={3} />
          <Caption $w={70}>EPSG:2154</Caption>
          <Slot $w={16}><Icon name="bubble" size={15} /></Slot>
        </StatusBar>
      </Window>
    </>
  );
}
